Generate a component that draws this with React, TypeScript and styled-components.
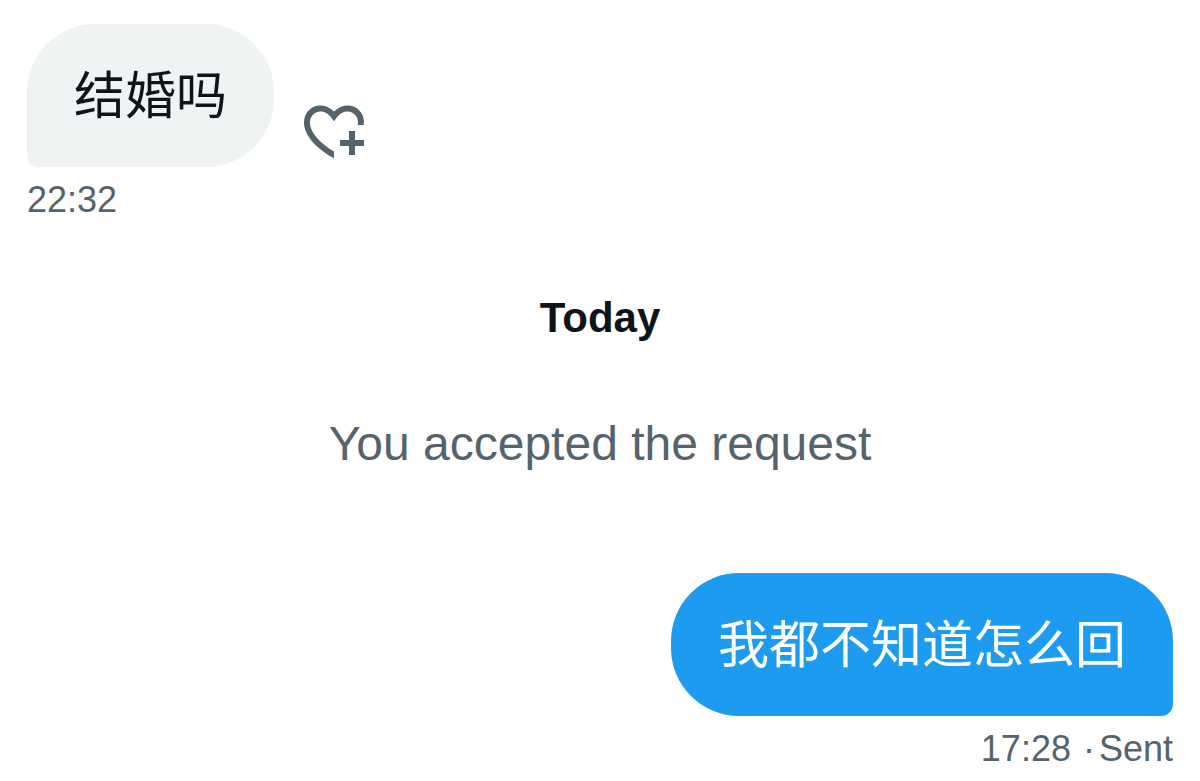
import React from "react";
import styled, { createGlobalStyle } from "styled-components";

const GlobalStyle = createGlobalStyle`
  * { box-sizing: border-box; }
  body {
    margin: 0;
    background: #ffffff;
    color: #0f1419;
    font-family: "Liberation Sans", "Noto Sans CJK SC", sans-serif;
  }
`;

const muted = "#55636c";

type Side = "received" | "sent";

const Conversation = styled.main`
  display: flex;
  flex-direction: column;
  padding: 24px 27px 8px;
`;

const Message = styled.article<{ $side: Side }>`
  display: flex;
  flex-direction: column;
  align-items: ${(p) => (p.$side === "sent" ? "flex-end" : "flex-start")};
`;

const BubbleRow = styled.div`
  display: flex;
  align-items: flex-end;
  gap: 24px;
`;

const Bubble = styled.p<{ $side: Side }>`
  margin: 0;
  padding: 31px 47px 38px;
  font-family: "Noto Sans CJK SC", sans-serif;
  font-size: 51px;
  line-height: 74px;
  color: ${(p) => (p.$side === "sent" ? "#ffffff" : "#0f1419")};
  background: ${(p) => (p.$side === "sent" ? "#1d9bf0" : "#eff3f4")};
  border-radius: ${(p) =>
    p.$side === "sent" ? "68px 68px 12px 68px" : "68px 68px 68px 12px"};
`;

const ReactButton = styled.button`
  display: flex;
  padding: 0;
  border: 0;
  background: none;
  color: ${muted};
  cursor: pointer;
`;

const Meta = styled.footer`
  display: flex;
  margin-top: 12px;
  font-size: 36px;
  line-height: 42px;
  color: ${muted};
`;

const Dot = styled.span`
  margin: 0 4px 0 12px;
`;

const DayHeading = styled.h2`
  margin: 72px 0 0;
  font-size: 42px;
  line-height: 50px;
  font-weight: 700;
  text-align: center;
`;

const Notice = styled.p`
  margin: 72px 0 100px;
  font-size: 48px;
  line-height: 58px;
  text-align: center;
  color: ${muted};
`;

function HeartPlusIcon() {
  return (
    <svg width="72" height="72" viewBox="0 0 24 24" fill="currentColor" aria-hidden="true">
      <path d="M17 12v3h-2.998v2h3v3h2v-3h3v-2h-3.001v-3H17zm-5 6.839c-3.871-2.34-6.053-4.639-7.127-6.609-1.112-2.04-1.031-3.7-.479-4.82.561-1.13 1.667-1.84 2.91-1.91 1.222-.06 2.68.51 3.892 2.16l.806 1.09.805-1.09c1.211-1.65 2.668-2.22 3.89-2.16 1.242.07 2.347.78 2.908 1.91.334.677.49 1.554.321 2.59h2.011c.153-1.283-.039-2.469-.539-3.48-.887-1.79-2.647-2.91-4.601-3.01-1.65-.09-3.367.56-4.796 2.01-1.43-1.45-3.147-2.1-4.798-2.01-1.954.1-3.714 1.22-4.601 3.01-.896 1.81-.846 4.17.514 6.67 1.353 2.48 4.003 5.12 8.382 7.67l.502.299v-2.32z" />
    </svg>
  );
}

export default function App() {
  return (
    <>
      <GlobalStyle />
      <Conversation>
        <Message $side="received">
          <BubbleRow>
            <Bubble $side="received" lang="zh-CN">结婚吗</Bubble>
            <ReactButton type="button" aria-label="Add reaction">
              <HeartPlusIcon />
            </ReactButton>
          </BubbleRow>
          <Meta>
            <time>22:32</time>
          </Meta>
        </Message>

        <DayHeading>Today</DayHeading>
        <Notice>You accepted the request</Notice>

        <Message $side="sent">
          <Bubble $side="sent" lang="zh-CN">我都不知道怎么回</Bubble>
          <Meta>
            <time>17:28</time>
            <Dot>·</Dot>
            <span>Sent</span>
          </Meta>
        </Message>
      </Conversation>
    </>
  );
}
